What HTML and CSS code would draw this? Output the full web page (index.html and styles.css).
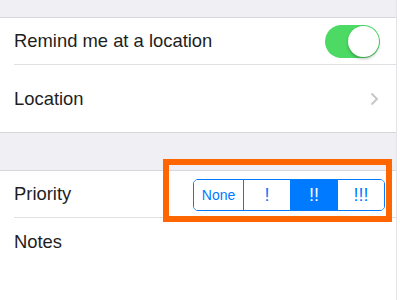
FILE: index.html
```html
<!DOCTYPE html>
<html lang="en">
<head>
    <meta charset="UTF-8">
    <title>Reminder Details</title>
    <link rel="stylesheet" href="styles.css">
</head>
<body>
    <div class="screen">
        <div class="table">
            <div class="gap top"></div>
            <section class="group">
                <div class="row">
                    <span class="label">Remind me at a location</span>
                    <span class="toggle on"><span class="knob"></span></span>
                </div>
                <div class="row tall">
                    <span class="label">Location</span>
                    <svg class="chevron" width="9" height="14" viewBox="0 0 9 14">
                        <polyline points="1.5,1.5 7,7 1.5,12.5" fill="none" stroke="#c7c7cc" stroke-width="2"/>
                    </svg>
                </div>
            </section>
            <div class="gap"></div>
            <section class="group open">
                <div class="row">
                    <span class="label">Priority</span>
                    <div class="segments">
                        <button>None</button>
                        <button class="bang">!</button>
                        <button class="bang active">!!</button>
                        <button class="bang">!!!</button>
                    </div>
                </div>
                <div class="row last">
                    <span class="label">Notes</span>
                </div>
            </section>
        </div>
        <div class="edge"></div>
        <div class="highlight"></div>
    </div>
</body>
</html>
```

FILE: styles.css
```css
body {
    margin: 0;
    font-family: "Liberation Sans", Arial, sans-serif;
    background-color: #fff;
}
.screen {
    position: relative;
    display: flex;
    width: 400px;
    height: 300px;
    overflow: hidden;
}
.table {
    width: 396px;
    display: flex;
    flex-direction: column;
}
.gap {
    height: 37px;
    background-color: #efeff4;
    border-bottom: 1px solid #d6d6db;
}
.gap.top {
    height: 17px;
}
.group {
    background-color: #fff;
    border-bottom: 1px solid #d6d6db;
}
.group.open {
    border-bottom: none;
    flex: 1;
}
.row {
    display: flex;
    align-items: center;
    justify-content: space-between;
    height: 46px;
    margin-left: 14px;
    padding-right: 16px;
    border-bottom: 1px solid #e0e0e4;
}
.row.tall {
    height: 67px;
    border-bottom: none;
}
.row.last {
    border-bottom: none;
    height: 47px;
}
.label {
    font-size: 18.4px;
    color: #1e1e1e;
}
.toggle {
    position: relative;
    width: 55px;
    height: 33px;
    border-radius: 17px;
    background-color: #4cd964;
}
.knob {
    position: absolute;
    right: 1px;
    top: 1px;
    width: 31px;
    height: 31px;
    border-radius: 50%;
    background-color: #fff;
    box-shadow: 0 2px 3px rgba(0, 0, 0, 0.25);
}
.chevron {
    margin-right: 1px;
}
.segments {
    display: flex;
    width: 192px;
    height: 32px;
    margin-right: -5px;
    margin-top: 1px;
    border: 1px solid #007aff;
    border-radius: 5px;
    overflow: hidden;
    box-sizing: border-box;
}
.segments button {
    flex: 1;
    margin: 0;
    padding: 0;
    border: none;
    border-left: 1px solid #007aff;
    background-color: #fff;
    color: #007aff;
    font-family: "Liberation Sans", Arial, sans-serif;
    font-size: 14px;
}
.segments button:first-child {
    border-left: none;
    flex: 0 0 49px;
}
.segments button.bang {
    font-size: 18px;
    line-height: 1;
}
.segments button.active {
    background-color: #007aff;
    color: #fff;
}
.edge {
    flex: 1;
    border-left: 1px solid #e4e4e8;
    background-color: #fff;
}
.highlight {
    position: absolute;
    left: 163px;
    top: 159px;
    width: 229px;
    height: 63px;
    box-sizing: border-box;
    border: 6px solid #ff6600;
}
```
